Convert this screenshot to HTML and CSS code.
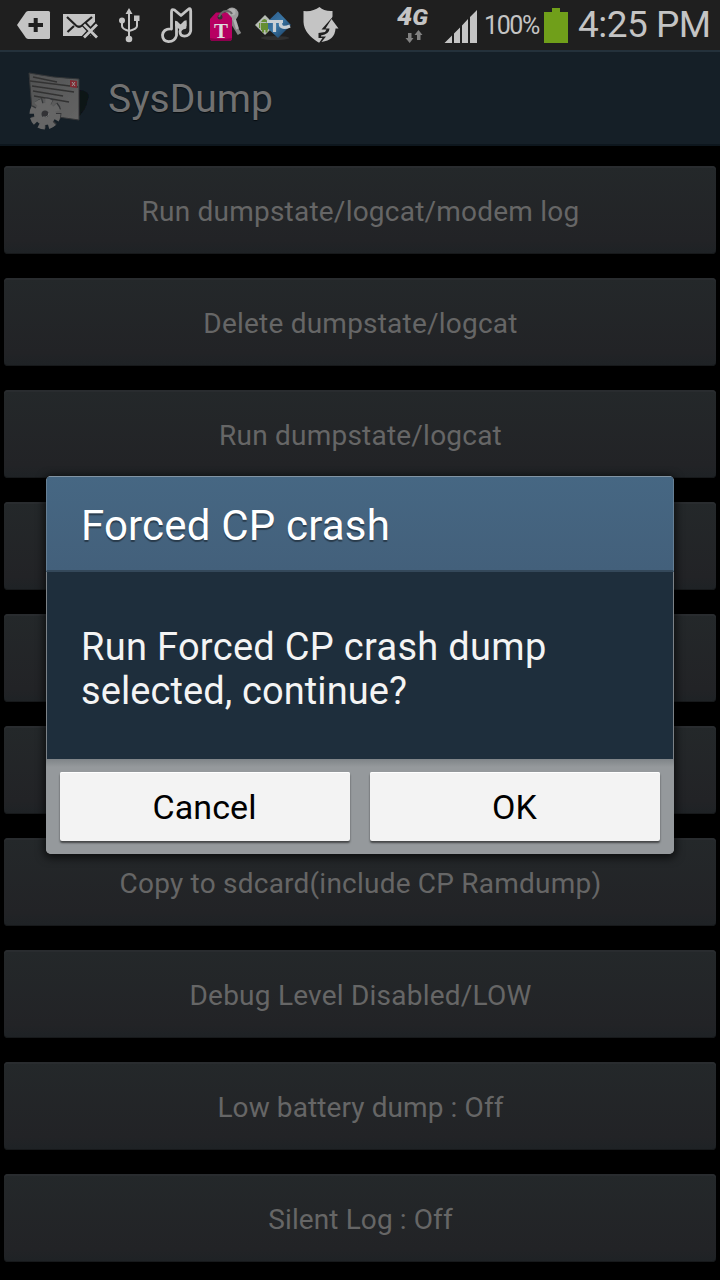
FILE: index.html
```html
<!DOCTYPE html>
<html lang="en">
<head>
<meta charset="utf-8">
<title>SysDump</title>
<link rel="stylesheet" href="styles.css">
</head>
<body>
<div class="screen">
  <header class="status">
    <svg class="glyph" width="40" height="50" viewBox="16 0 40 50"><path fill="#c4c4c4" d="M17 25 26 12Q27 11 28.500 11H48.500Q50 11 50 12.500V37.500Q50 39 48.500 39H28.500Q27 39 26 38Z"/><path d="M28.500 25H43M35.700 18V32" stroke="#1f1f1f" stroke-width="4"/></svg>
    <svg class="glyph" width="54" height="50" viewBox="56 0 54 50"><path fill="#c4c4c4" d="M63 14H95V36H63Z"/><path d="M67 17 76 25.500Q79 28 82 25.500L92 17M67.500 32 74 26" fill="none" stroke="#1f1f1f" stroke-width="2.200"/><path d="M84 24 97 38M97 24 84 38" stroke="#1f1f1f" stroke-width="6"/><path d="M84 24.500 97 37.500M97 24.500 84 37.500" stroke="#c4c4c4" stroke-width="2.800"/></svg>
    <svg class="glyph" width="40" height="50" viewBox="110 0 40 50"><g fill="#c4c4c4"><path d="M129 8 132.500 14H125.500ZM134 15.500H139.500V21H134Z"/><circle cx="122" cy="20.500" r="3"/><circle cx="129" cy="39" r="3.300"/></g><path d="M129 13V38M122 21V26Q122 29 129 31Q137 29 137 26V20" fill="none" stroke="#c4c4c4" stroke-width="2"/></svg>
    <svg class="glyph" width="50" height="50" viewBox="150 0 50 50"><path d="M171.500 29V12Q171.500 8.500 174.500 10L181 15.500 188 9.500Q190.700 7 190.700 11V31Q189.500 36 184.500 36.200Q180 36 180 31.500Q180.500 28 185 27.500V22L180.500 27 176.500 22.500V35.500Q175 41.500 168.500 41.700Q162.500 41 162.500 35Q163.500 28.500 171.500 29Z" fill="#1f1f1f" stroke="#c4c4c4" stroke-width="2.800" stroke-linejoin="round"/><path d="M175 20.500 180.500 24.500 186.500 20V26L180.500 30 175 26Z" fill="#c4c4c4"/></svg>
    <svg class="glyph" width="48" height="50" viewBox="200 0 48 50"><path d="M228 15 239.500 34" stroke="#858585" stroke-width="4"/><path d="M233 15 237.500 29" stroke="#b0b0b0" stroke-width="3"/><circle cx="232" cy="14" r="6.500" fill="#9c9c9c"/><circle cx="232" cy="12" r="3.500" fill="#b1b1b1"/><path d="M210 19 216 12.500H227L232 18V38Q232 41 229 41H213Q210 41 210 38Z" fill="#b70062"/><path d="M210 38Q221 40 232 38Q232 41 229 41H213Q210 41 210 38Z" fill="#8d004d"/><circle cx="220" cy="17" r="2.500" fill="#333"/><path d="M219 17C222 9 230 10 232 14" stroke="#656565" stroke-width="2" fill="none"/><text class="brand-letter" x="221" y="38" text-anchor="middle">T</text></svg>
    <svg class="glyph" width="49" height="50" viewBox="248 0 49 50"><defs><linearGradient id="blue" x2="1" y2="1"><stop stop-color="#285586"/><stop offset=".5" stop-color="#3a76a4"/><stop offset="1" stop-color="#123254"/></linearGradient></defs><ellipse cx="275" cy="38" rx="14" ry="2" fill="#303030"/><path d="M255 25 265 15 275 25 265 35Z" fill="#b6bcb4"/><path d="M264 25 278 11.500 291 25 278 38Z" fill="url(#blue)"/><g fill="#668e33"><path d="M261 23H268V30H261ZM261 22Q264.500 16 268 22ZM259 23H260.200V28H259ZM262 30H264V32.500H262ZM265.500 30H267.500V32.500H265.500Z"/></g><path d="M267 21.500H283M274.500 21.500V32M281 21.500C279 27 283 29 290 26" fill="none" stroke="#c8d0d5" stroke-width="3.200"/></svg>
    <svg class="glyph" width="48" height="50" viewBox="297 0 48 50"><path d="M319.500 7Q324 11.500 332.500 11V22Q332 33 319.500 43Q304 34 303.500 22V11Q313 12 319.500 7Z" fill="#c4c4c4"/><path d="M333 16.500 321.500 29.500H326.500L325 32 318.500 33V38H322.500L319 43H326Q336 39 336 30H340Z" fill="#1f1f1f"/><path d="M331.500 19 325.500 28.500H329.500Q329.500 34 321 35.500V36.500H326L321.500 42Q335 40 335.500 28.500H338.500Z" fill="#c4c4c4"/></svg>
    <span class="spacer"></span>
    <svg class="glyph" width="48" height="50" viewBox="392 0 48 50"><text class="network" x="397" y="25" textLength="31" lengthAdjust="spacingAndGlyphs">4<tspan class="generation">G</tspan></text><path fill="#818181" d="M408 33H411.500V38H413.500L409.700 43 405.500 38H408ZM417 40H420.500V35H422.500L418.500 30 414.500 35H417Z"/></svg>
    <svg class="glyph" width="44" height="50" viewBox="440 0 44 50"><path fill="#c4c4c4" d="M444.500 43 452 35.500V43ZM454 33.500 460 27.500V43H454ZM462 25.500 468 19V43H462ZM470 17 477 10V43H470Z"/></svg>
    <span class="percent">100%</span>
    <svg class="glyph" width="26" height="50" viewBox="543 0 26 50"><path fill="#709f1a" d="M544 12H552V8H560V12H568V43H544Z"/></svg>
    <span class="clock">4:25 PM</span>
  </header>
  <div class="actionbar">
    <svg class="app-icon" width="72" height="76" viewBox="22 60 72 76"><defs><filter id="soft"><feGaussianBlur stdDeviation=".7"/></filter><linearGradient id="paper" y2="1"><stop stop-color="#505152"/><stop offset="1" stop-color="#646464"/></linearGradient></defs><g filter="url(#soft)"><path d="M79 90Q91 91 88 99Q86 111 76 119Z" fill="#0c1217"/><path d="M29 73Q53 78 79 79V120L58 117 32 110Z" fill="url(#paper)" stroke="#343638" stroke-width="1"/><path d="M30 81 78 87M33 77 57 82M32 86 74 92M33 91 63 96M34 96 69 102" stroke="#333" stroke-width="1.500"/><path d="M70 80 77 81V88L70 87Z" fill="#812b33"/><path d="M72 82 75 86M75 82 72 86" stroke="#999"/></g><g filter="url(#soft)" transform="translate(45 114)"><circle cx="1" cy="-1" r="12.500" fill="none" stroke="#343638" stroke-width="6" stroke-dasharray="6.200 3.617"/><circle r="11" fill="#666"/><circle r="12.500" fill="none" stroke="#666" stroke-width="6" stroke-dasharray="6.200 3.617"/><circle r="3.500" fill="#303336"/><path d="M-2 3Q3 4 4-1" stroke="#777" fill="none"/></g></svg>
    <h1 class="app-title">SysDump</h1>
  </div>
  <main class="commands">
    <button class="command">Run dumpstate/logcat/modem log</button>
    <button class="command">Delete dumpstate/logcat</button>
    <button class="command">Run dumpstate/logcat</button>
    <button class="command"></button>
    <button class="command"></button>
    <button class="command"></button>
    <button class="command">Copy to sdcard(include CP Ramdump)</button>
    <button class="command">Debug Level Disabled/LOW</button>
    <button class="command short">Low battery dump : Off</button>
    <button class="command short">Silent Log : Off</button>
  </main>
  <section class="dialog" role="dialog">
    <h2 class="dialog-title">Forced CP crash</h2>
    <p class="dialog-message">Run Forced CP crash dump<br><span class="prompt">selected, continue?</span></p>
    <div class="dialog-actions"><button class="choice">Cancel</button><button class="choice">OK</button></div>
  </section>
</div>
</body>
</html>
```
FILE: styles.css
```css
* { box-sizing: border-box; }
body { margin: 0; background: #000; font-family: Roboto, sans-serif; }
button { font-family: inherit; border: 0; padding: 0; }
h1, h2, p { margin: 0; font-weight: 400; }
.screen { position: relative; width: 720px; height: 1280px; overflow: hidden; background: #000; }
.status { display: flex; height: 50px; padding-left: 16px; background: #1f1f1f; color: #c4c4c4; }
.glyph { display: block; flex: none; }
.spacer { width: 47px; flex: none; }
.brand-letter { font: bold 21px "Liberation Serif", serif; fill: #ddd; }
.network { font: italic 900 25px Roboto, sans-serif; fill: #c4c4c4; }
.generation { font-size: 22px; }
.percent { width: 59px; font-size: 25px; line-height: 52px; letter-spacing: -1.4px; }
.clock { margin-left: 9px; font-size: 37px; line-height: 50px; letter-spacing: -.5px; white-space: nowrap; }
.actionbar { display: flex; align-items: center; height: 96px; padding-left: 22px; background: #151f27; border-top: 2px solid #24313b; border-bottom: 2px solid #0d161d; }
.app-title { margin-left: 14px; padding-top: 2px; font-size: 39px; line-height: 48px; color: #717171; text-shadow: 0 1px 1px #080d11; }
.commands { display: flex; flex-direction: column; gap: 24px; padding: 20px 4px 0; }
.command { height: 88px; flex: none; border-radius: 4px; font-size: 28px; letter-spacing: .22px; color: #666; background: linear-gradient(#24282a, #222326 85%, #1e2225); box-shadow: inset 0 2px #292c2f, inset 0 -1px #17191b; padding: 3px 0 0 1px; }
.command.short { letter-spacing: .1px; }
.dialog { position: absolute; left: 46px; top: 476px; width: 628px; height: 378px; display: flex; flex-direction: column; border-radius: 5px; overflow: hidden; background: #95999c; box-shadow: 0 2px 9px 2px rgba(0,0,0,.65); }
.dialog-title { height: 96px; padding: 0 34px; font-size: 42px; line-height: 98px; letter-spacing: .18px; color: #fff; text-shadow: 0 2px 1px rgba(0,0,0,.4); background: linear-gradient(#466783, #43607b); border: 1px solid #667f94; border-top: 1px solid #8294a3; border-bottom: 2px solid #34485a; }
.dialog-message { height: 187px; padding: 53px 34px 0; font-size: 38px; line-height: 44px; letter-spacing: .3px; color: #f4f4f4; background: #1e2e3c; border: solid #7c8287; border-width: 0 1px; }
.prompt { letter-spacing: .1px; }
.dialog-actions { height: 95px; display: grid; grid-template-columns: 290px 290px; gap: 20px; padding: 13px 14px; background: linear-gradient(#7f8488, #95999c 8px); }
.choice { height: 69px; border-radius: 2px; background: #f3f3f3; font-size: 34px; letter-spacing: .1px; color: #000; padding-right: 1px; box-shadow: inset 0 1px #fff, 0 2px 2px rgba(0,0,0,.55); }
```
